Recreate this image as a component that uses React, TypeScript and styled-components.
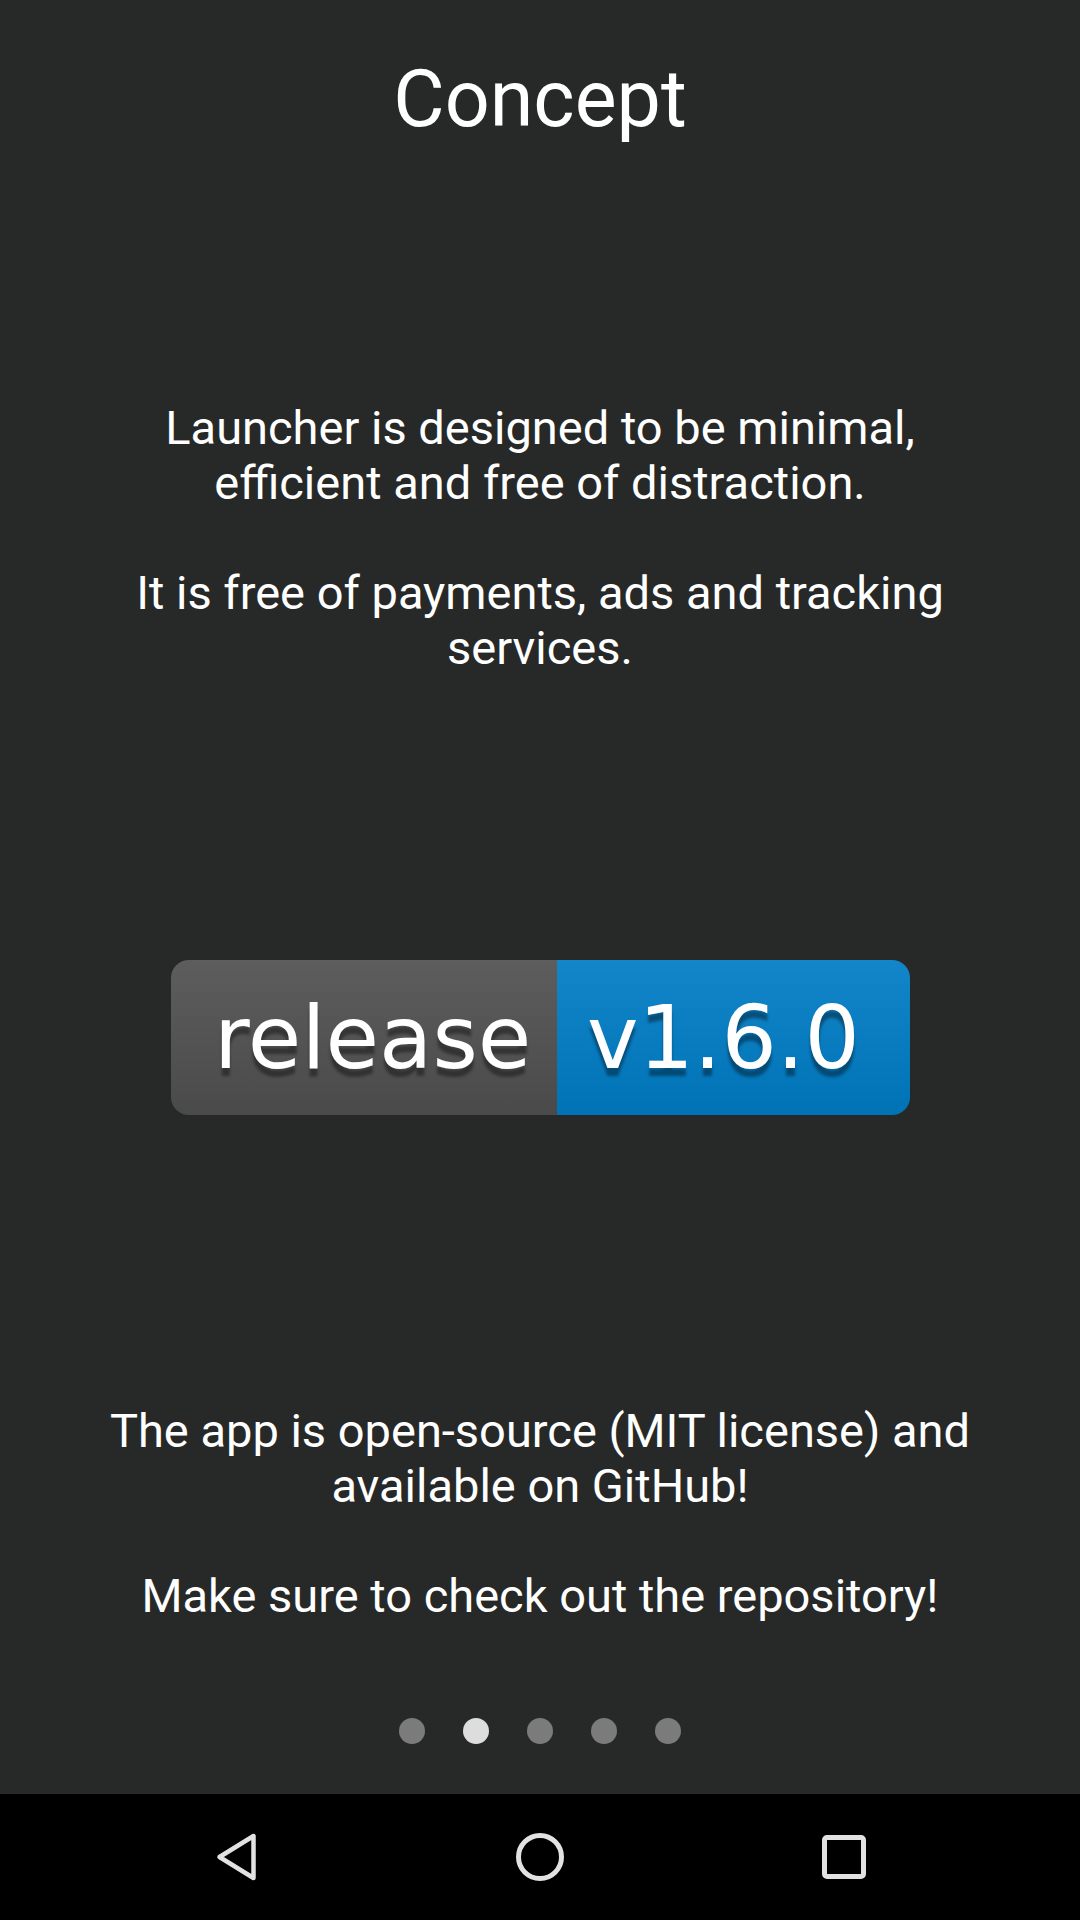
import React from "react";
import styled, { createGlobalStyle } from "styled-components";

const GlobalStyle = createGlobalStyle`
  html, body {
    margin: 0;
    padding: 0;
    background: #272928;
  }
  * { box-sizing: border-box; }
`;

const Screen = styled.div`
  width: 1080px;
  height: 1920px;
  display: flex;
  flex-direction: column;
  background: #272928;
  font-family: Roboto, "Noto Sans", "Liberation Sans", sans-serif;
  color: #ffffff;
  overflow: hidden;
`;

const Content = styled.main`
  flex: 1;
  display: flex;
  flex-direction: column;
  align-items: center;
`;

const Title = styled.h1`
  margin: 52px 0 0;
  font-size: 79px;
  line-height: 94px;
  font-weight: 400;
  text-align: center;
`;

const TextBlock = styled.section<{ $top: number }>`
  margin-top: ${(p) => p.$top}px;
  width: 900px;
  display: flex;
  flex-direction: column;
  gap: 55px;
`;

const Paragraph = styled.p`
  margin: 0;
  font-size: 47px;
  line-height: 55px;
  text-align: center;
  font-weight: 400;
`;

const Badge = styled.div`
  margin-top: 285px;
  margin-left: 1px;
  display: flex;
  height: 155px;
  border-radius: 18px;
  overflow: hidden;
  font-family: "DejaVu Sans", Verdana, sans-serif;
  font-size: 87px;
  line-height: 155px;
  color: #ffffff;
`;

const BadgePart = styled.div<{ $width: number; $pad: number; $from: string; $to: string }>`
  width: ${(p) => p.$width}px;
  padding-left: ${(p) => p.$pad}px;
  padding-top: 1px;
  background: linear-gradient(to bottom, ${(p) => p.$from}, ${(p) => p.$to});
  white-space: nowrap;
  text-shadow: 0 8px 3px rgba(1, 1, 1, 0.38);
`;

const Dots = styled.div`
  margin-top: 95px;
  display: flex;
  gap: 38px;
`;

const Dot = styled.span<{ $active?: boolean }>`
  width: 26px;
  height: 26px;
  border-radius: 50%;
  background: ${(p) => (p.$active ? "#dddddd" : "#7b7b7b")};
`;

const NavBar = styled.nav`
  height: 126px;
  background: #000000;
  display: flex;
  justify-content: center;
  align-items: center;
  gap: 144px;
`;

const NavButton = styled.div`
  width: 160px;
  height: 126px;
  display: flex;
  align-items: center;
  justify-content: center;
`;

const stroke = "#e2e2e2";

export default function App() {
  return (
    <>
      <GlobalStyle />
      <Screen>
        <Content>
          <Title>Concept</Title>
          <TextBlock $top={254}>
            <Paragraph>Launcher is designed to be minimal, efficient and free of distraction.</Paragraph>
            <Paragraph>It is free of payments, ads and tracking services.</Paragraph>
          </TextBlock>
          <Badge>
            <BadgePart $width={386} $pad={43} $from="#5d5d5d" $to="#4a4a4a">
              release
            </BadgePart>
            <BadgePart $width={353} $pad={30} $from="#1386c9" $to="#0072b6">
              v1.6.0
            </BadgePart>
          </Badge>
          <TextBlock $top={288}>
            <Paragraph>The app is open-source (MIT license) and available on GitHub!</Paragraph>
            <Paragraph>Make sure to check out the repository!</Paragraph>
          </TextBlock>
          <Dots>
            <Dot />
            <Dot $active />
            <Dot />
            <Dot />
            <Dot />
          </Dots>
        </Content>
        <NavBar>
          <NavButton>
            <svg width="56" height="56" viewBox="0 0 56 56">
              <polygon
                points="11.5,28 45.5,7 45.5,49"
                fill="none"
                stroke={stroke}
                strokeWidth="4.5"
                strokeLinejoin="round"
              />
            </svg>
          </NavButton>
          <NavButton>
            <svg width="56" height="56" viewBox="0 0 56 56">
              <circle cx="28" cy="28" r="21.5" fill="none" stroke={stroke} strokeWidth="5" />
            </svg>
          </NavButton>
          <NavButton>
            <svg width="56" height="56" viewBox="0 0 56 56">
              <rect x="8.5" y="8.5" width="39" height="39" rx="2.5" fill="none" stroke={stroke} strokeWidth="5" />
            </svg>
          </NavButton>
        </NavBar>
      </Screen>
    </>
  );
}
